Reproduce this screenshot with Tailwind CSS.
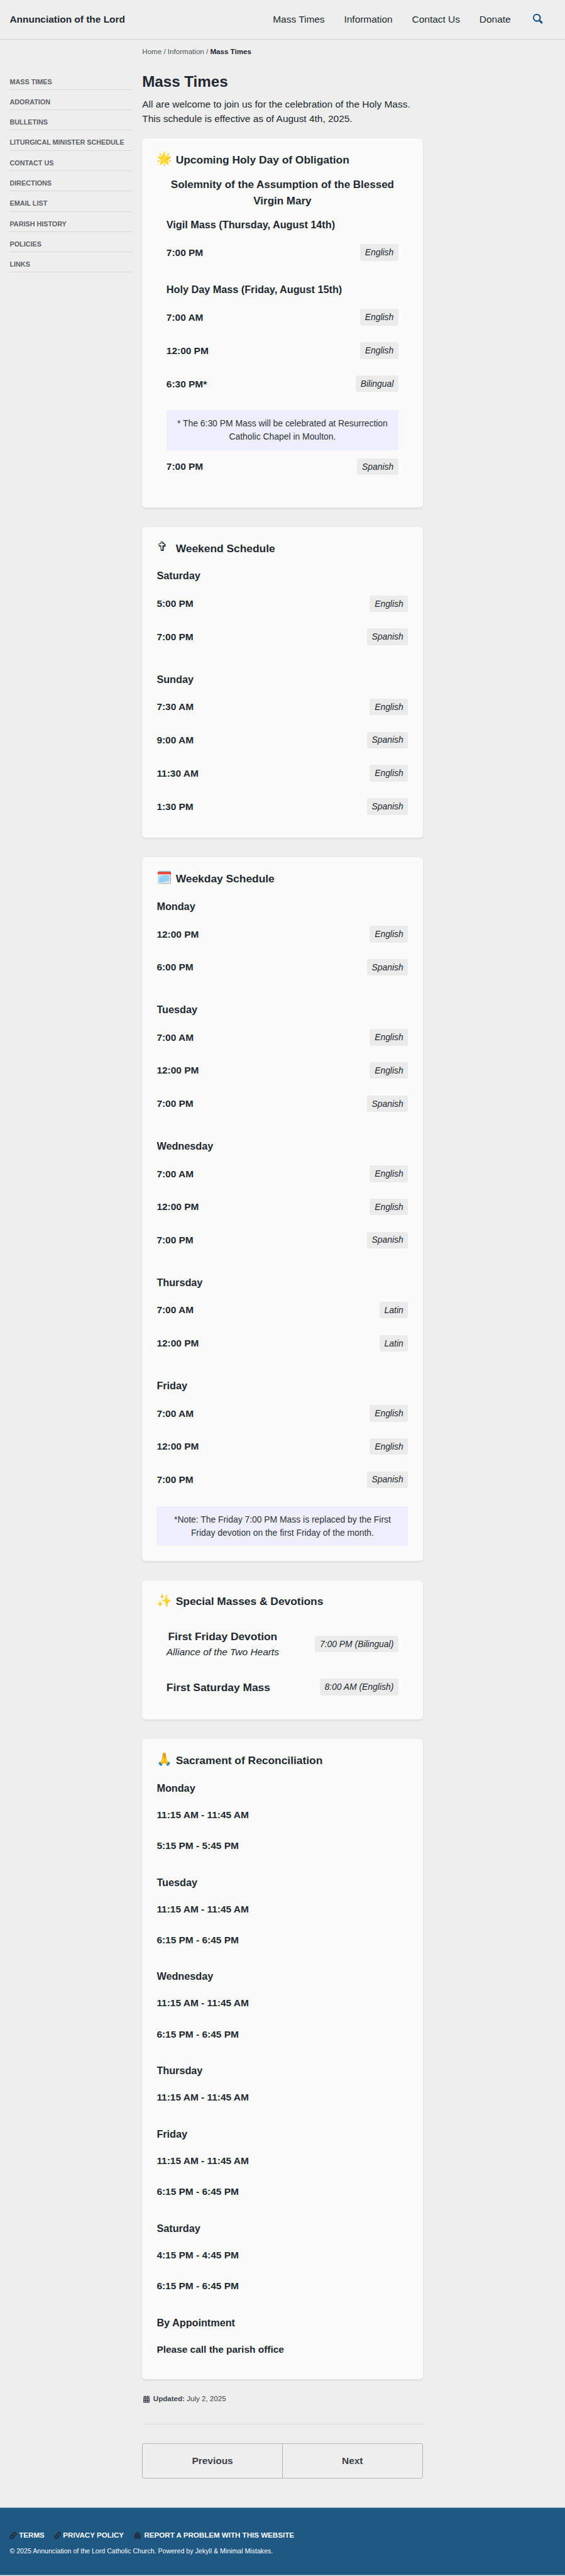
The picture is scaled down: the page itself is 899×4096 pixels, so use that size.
<!DOCTYPE html>
<html lang="en" class="text-[15.45px]">
<head>
<meta charset="utf-8">
<title>Mass Times - Annunciation of the Lord</title>
<script src="https://cdn.jsdelivr.net/npm/@tailwindcss/browser@4"></script>
<style>
  body { font-family: "Liberation Sans", Arial, "Noto Color Emoji", "DejaVu Sans", sans-serif; }
  .icon { font-family: "Noto Color Emoji", "DejaVu Sans", sans-serif; }
</style>
</head>
<body class="bg-[#eeeeee] text-[#222831] text-base leading-normal">
<svg class="hidden">
  <symbol id="link" viewBox="0 0 512 512"><path d="M326.612 185.391c59.747 59.809 58.927 155.698.36 214.59-.11.12-.24.25-.36.37l-67.2 67.2c-59.27 59.27-155.699 59.262-214.96 0-59.27-59.26-59.27-155.7 0-214.96l37.106-37.106c9.84-9.84 26.786-3.3 27.294 10.606.648 17.722 3.826 35.527 9.69 52.721 1.986 5.822.567 12.262-3.783 16.612l-13.087 13.087c-28.026 28.026-28.905 73.66-1.155 101.96 28.024 28.579 74.086 28.749 102.325.51l67.2-67.19c28.191-28.191 28.073-73.757 0-101.83-3.701-3.694-7.429-6.564-10.341-8.569a16.037 16.037 0 0 1-6.947-12.606c-.396-10.567 3.348-21.456 11.698-29.806l21.054-21.055c5.521-5.521 14.182-6.199 20.584-1.731a152.482 152.482 0 0 1 20.522 17.197zM467.547 44.449c-59.261-59.262-155.69-59.27-214.96 0l-67.2 67.2c-.12.12-.25.25-.36.37-58.566 58.892-59.387 154.781.36 214.59a152.454 152.454 0 0 0 20.521 17.196c6.402 4.468 15.064 3.789 20.584-1.731l21.054-21.055c8.35-8.35 12.094-19.239 11.698-29.806a16.037 16.037 0 0 0-6.947-12.606c-2.912-2.005-6.64-4.875-10.341-8.569-28.073-28.073-28.191-73.639 0-101.83l67.2-67.19c28.239-28.239 74.3-28.069 102.325.51 27.75 28.3 26.872 73.934-1.155 101.96l-13.087 13.087c-4.35 4.35-5.769 10.79-3.783 16.612 5.864 17.194 9.042 34.999 9.69 52.721.509 13.906 17.454 20.446 27.294 10.606l37.106-37.106c59.271-59.259 59.271-155.699.001-214.959z"/></symbol>
</svg>

<header class="border-b border-[#cfd0d1]">
  <div class="flex h-16 items-center px-4">
    <a class="mr-auto font-bold">Annunciation of the Lord</a>
    <nav class="flex gap-8">
      <a>Mass Times</a>
      <a>Information</a>
      <a>Contact Us</a>
      <a>Donate</a>
    </nav>
    <button class="ml-[35.5px] mr-[20px]" aria-label="Search">
      <svg class="mb-[2px] block size-4 fill-[#1f5885]" viewBox="0 0 16 16"><path d="M15.5,13.12L13.19,10.8a1.69,1.69,0,0,0-1.28-.55l-.06-.06A6.5,6.5,0,0,0,5.77,0,6.5,6.5,0,0,0,2.46,11.59a6.47,6.47,0,0,0,7.74.26l.05.05a1.65,1.65,0,0,0,.5,1.24l2.38,2.38A1.68,1.68,0,0,0,15.5,13.12ZM6.4,2A4.41,4.41,0,1,1,2,6.4,4.43,4.43,0,0,1,6.4,2Z"/></svg>
    </button>
  </div>
</header>

<nav class="pl-[226.3px] pt-3 text-xs leading-normal text-[#50565d]">
  <span>Home</span> / <span>Information</span> / <strong class="text-[#222831]">Mass Times</strong>
</nav>

<div class="flex">
  <aside class="ml-4 mr-[15.6px] mt-[18.7px] w-[195.2px] shrink-0">
    <ul class="text-[0.7rem] font-bold uppercase leading-[23.2px] text-[#5d6166]">
      <li class="flex h-[32.3px] flex-col justify-end border-b border-[#d6d7d8]">Mass Times</li>
      <li class="flex h-[32.3px] flex-col justify-end border-b border-[#d6d7d8]">Adoration</li>
      <li class="flex h-[32.3px] flex-col justify-end border-b border-[#d6d7d8]">Bulletins</li>
      <li class="flex h-[32.3px] flex-col justify-end border-b border-[#d6d7d8]">Liturgical Minister Schedule</li>
      <li class="flex h-[32.3px] flex-col justify-end border-b border-[#d6d7d8]">Contact Us</li>
      <li class="flex h-[32.3px] flex-col justify-end border-b border-[#d6d7d8]">Directions</li>
      <li class="flex h-[32.3px] flex-col justify-end border-b border-[#d6d7d8]">Email List</li>
      <li class="flex h-[32.3px] flex-col justify-end border-b border-[#d6d7d8]">Parish History</li>
      <li class="flex h-[32.3px] flex-col justify-end border-b border-[#d6d7d8]">Policies</li>
      <li class="flex h-[32.3px] flex-col justify-end border-b border-[#d6d7d8]">Links</li>
    </ul>
  </aside>

  <main class="w-[446.4px]">
    <h1 class="mt-[24.5px] text-[1.563rem] font-bold leading-[1.2]">Mass Times</h1>
    <p class="mt-[8.7px] mb-[1.3rem]">All are welcome to join us for the celebration of the Holy Mass.<br>This schedule is effective as of August 4th, 2025.</p>

    <section class="rounded-[5.6px] bg-[#fafafa] p-6 pb-10 shadow-[0_1.4px_3.5px_rgba(0,0,0,0.08)]">
      <h2 class="flex h-[22.6px] items-center text-lg font-bold leading-none"><span class="icon w-[30.3px] shrink-0 pb-[5px] text-[20px] font-normal">🌟</span>Upcoming Holy Day of Obligation</h2>
      <div class="mt-[15px] px-4">
        <h3 class="text-center text-[1.1rem] font-bold whitespace-nowrap">Solemnity of the Assumption of the Blessed<br>Virgin Mary</h3>
        <h4 class="mt-[12.8px] mb-[5.7px] text-[1.05rem] font-bold">Vigil Mass (Thursday, August 14th)</h4>
        <div class="flex h-[52.88px] items-center justify-between"><b>7:00 PM</b><i class="rounded-[3px] bg-[#ebebeb] px-2 py-[2.95px] text-[0.9rem]">English</i></div>
        <h4 class="mt-[20.1px] mb-[5.7px] text-[1.05rem] font-bold">Holy Day Mass (Friday, August 15th)</h4>
        <div class="flex h-[52.88px] items-center justify-between"><b>7:00 AM</b><i class="rounded-[3px] bg-[#ebebeb] px-2 py-[2.95px] text-[0.9rem]">English</i></div>
        <div class="flex h-[52.88px] items-center justify-between"><b>12:00 PM</b><i class="rounded-[3px] bg-[#ebebeb] px-2 py-[2.95px] text-[0.9rem]">English</i></div>
        <div class="flex h-[52.88px] items-center justify-between"><b>6:30 PM*</b><i class="rounded-[3px] bg-[#ebebeb] px-2 py-[2.95px] text-[0.9rem]">Bilingual</i></div>
        <p class="mt-[15.1px] rounded-[3px] bg-[#eeeeff] py-[11.1px] text-center text-[0.9rem] whitespace-nowrap text-[#2d333b]">* The 6:30 PM Mass will be celebrated at Resurrection<br>Catholic Chapel in Moulton.</p>
        <div class="flex h-[52.88px] items-center justify-between"><b>7:00 PM</b><i class="rounded-[3px] bg-[#ebebeb] px-2 py-[2.95px] text-[0.9rem]">Spanish</i></div>
      </div>
    </section>

    <section class="mt-8 rounded-[5.6px] bg-[#fafafa] p-6 shadow-[0_1.4px_3.5px_rgba(0,0,0,0.08)]">
      <h2 class="mb-[19.8px] flex h-[22.6px] items-center text-lg font-bold leading-none"><span class="icon w-[30.3px] shrink-0 pb-[7px] text-[20px] font-normal">✞</span>Weekend Schedule</h2>
      <div class="flex flex-col gap-[28.3px]">
        <div>
          <h3 class="mb-[5.7px] text-[1.05rem] font-bold">Saturday</h3>
          <div class="flex h-[52.88px] items-center justify-between"><b>5:00 PM</b><i class="rounded-[3px] bg-[#ebebeb] px-2 py-[2.95px] text-[0.9rem]">English</i></div>
          <div class="flex h-[52.88px] items-center justify-between"><b>7:00 PM</b><i class="rounded-[3px] bg-[#ebebeb] px-2 py-[2.95px] text-[0.9rem]">Spanish</i></div>
        </div>
        <div>
          <h3 class="mb-[5.7px] text-[1.05rem] font-bold">Sunday</h3>
          <div class="flex h-[52.88px] items-center justify-between"><b>7:30 AM</b><i class="rounded-[3px] bg-[#ebebeb] px-2 py-[2.95px] text-[0.9rem]">English</i></div>
          <div class="flex h-[52.88px] items-center justify-between"><b>9:00 AM</b><i class="rounded-[3px] bg-[#ebebeb] px-2 py-[2.95px] text-[0.9rem]">Spanish</i></div>
          <div class="flex h-[52.88px] items-center justify-between"><b>11:30 AM</b><i class="rounded-[3px] bg-[#ebebeb] px-2 py-[2.95px] text-[0.9rem]">English</i></div>
          <div class="flex h-[52.88px] items-center justify-between"><b>1:30 PM</b><i class="rounded-[3px] bg-[#ebebeb] px-2 py-[2.95px] text-[0.9rem]">Spanish</i></div>
        </div>
      </div>
    </section>

    <section class="mt-8 rounded-[5.6px] bg-[#fafafa] p-6 shadow-[0_1.4px_3.5px_rgba(0,0,0,0.08)]">
      <h2 class="mb-[19.8px] flex h-[22.6px] items-center text-lg font-bold leading-none"><span class="icon w-[30.3px] shrink-0 pb-[5px] text-[20px] font-normal">🗓️</span>Weekday Schedule</h2>
      <div class="flex flex-col gap-[28.3px]">
        <div>
          <h3 class="mb-[5.7px] text-[1.05rem] font-bold">Monday</h3>
          <div class="flex h-[52.88px] items-center justify-between"><b>12:00 PM</b><i class="rounded-[3px] bg-[#ebebeb] px-2 py-[2.95px] text-[0.9rem]">English</i></div>
          <div class="flex h-[52.88px] items-center justify-between"><b>6:00 PM</b><i class="rounded-[3px] bg-[#ebebeb] px-2 py-[2.95px] text-[0.9rem]">Spanish</i></div>
        </div>
        <div>
          <h3 class="mb-[5.7px] text-[1.05rem] font-bold">Tuesday</h3>
          <div class="flex h-[52.88px] items-center justify-between"><b>7:00 AM</b><i class="rounded-[3px] bg-[#ebebeb] px-2 py-[2.95px] text-[0.9rem]">English</i></div>
          <div class="flex h-[52.88px] items-center justify-between"><b>12:00 PM</b><i class="rounded-[3px] bg-[#ebebeb] px-2 py-[2.95px] text-[0.9rem]">English</i></div>
          <div class="flex h-[52.88px] items-center justify-between"><b>7:00 PM</b><i class="rounded-[3px] bg-[#ebebeb] px-2 py-[2.95px] text-[0.9rem]">Spanish</i></div>
        </div>
        <div>
          <h3 class="mb-[5.7px] text-[1.05rem] font-bold">Wednesday</h3>
          <div class="flex h-[52.88px] items-center justify-between"><b>7:00 AM</b><i class="rounded-[3px] bg-[#ebebeb] px-2 py-[2.95px] text-[0.9rem]">English</i></div>
          <div class="flex h-[52.88px] items-center justify-between"><b>12:00 PM</b><i class="rounded-[3px] bg-[#ebebeb] px-2 py-[2.95px] text-[0.9rem]">English</i></div>
          <div class="flex h-[52.88px] items-center justify-between"><b>7:00 PM</b><i class="rounded-[3px] bg-[#ebebeb] px-2 py-[2.95px] text-[0.9rem]">Spanish</i></div>
        </div>
        <div>
          <h3 class="mb-[5.7px] text-[1.05rem] font-bold">Thursday</h3>
          <div class="flex h-[52.88px] items-center justify-between"><b>7:00 AM</b><i class="rounded-[3px] bg-[#ebebeb] px-2 py-[2.95px] text-[0.9rem]">Latin</i></div>
          <div class="flex h-[52.88px] items-center justify-between"><b>12:00 PM</b><i class="rounded-[3px] bg-[#ebebeb] px-2 py-[2.95px] text-[0.9rem]">Latin</i></div>
        </div>
        <div>
          <h3 class="mb-[5.7px] text-[1.05rem] font-bold">Friday</h3>
          <div class="flex h-[52.88px] items-center justify-between"><b>7:00 AM</b><i class="rounded-[3px] bg-[#ebebeb] px-2 py-[2.95px] text-[0.9rem]">English</i></div>
          <div class="flex h-[52.88px] items-center justify-between"><b>12:00 PM</b><i class="rounded-[3px] bg-[#ebebeb] px-2 py-[2.95px] text-[0.9rem]">English</i></div>
          <div class="flex h-[52.88px] items-center justify-between"><b>7:00 PM</b><i class="rounded-[3px] bg-[#ebebeb] px-2 py-[2.95px] text-[0.9rem]">Spanish</i></div>
        </div>
      </div>
      <p class="mt-4 rounded-[3px] bg-[#eeeeff] py-[11px] text-center text-[0.9rem] whitespace-nowrap text-[#2d333b]">*Note: The Friday 7:00 PM Mass is replaced by the First<br>Friday devotion on the first Friday of the month.</p>
    </section>

    <section class="mt-8 rounded-[5.6px] bg-[#fafafa] p-6 pb-[38.2px] shadow-[0_1.4px_3.5px_rgba(0,0,0,0.08)]">
      <h2 class="flex h-[22.6px] items-center text-lg font-bold leading-none"><span class="icon w-[30.3px] shrink-0 pb-[5px] text-[20px] font-normal">✨</span>Special Masses &amp; Devotions</h2>
      <div class="mt-[31.1px] flex flex-col gap-[30.6px] px-4">
        <div class="flex items-center justify-between">
          <div class="text-center"><h3 class="text-lg font-bold leading-normal">First Friday Devotion</h3><i class="block">Alliance of the Two Hearts</i></div>
          <i class="rounded-[3px] bg-[#ebebeb] px-2 py-[2.95px] text-[0.9rem]">7:00 PM (Bilingual)</i>
        </div>
        <div class="flex items-center justify-between">
          <h3 class="text-lg font-bold leading-normal">First Saturday Mass</h3>
          <i class="rounded-[3px] bg-[#ebebeb] px-2 py-[2.95px] text-[0.9rem]">8:00 AM (English)</i>
        </div>
      </div>
    </section>

    <section class="mt-8 rounded-[5.6px] bg-[#fafafa] p-6 shadow-[0_1.4px_3.5px_rgba(0,0,0,0.08)]">
      <h2 class="mb-[19.8px] flex h-[22.6px] items-center text-lg font-bold leading-none"><span class="icon w-[30.3px] shrink-0 pb-[5px] text-[20px] font-normal">🙏</span>Sacrament of Reconciliation</h2>
      <div class="flex flex-col gap-[21.4px]">
        <div>
          <h3 class="mb-[5.7px] text-[1.05rem] font-bold">Monday</h3>
          <div class="flex h-[49.26px] items-center"><b>11:15 AM - 11:45 AM</b></div>
          <div class="flex h-[49.26px] items-center"><b>5:15 PM - 5:45 PM</b></div>
        </div>
        <div>
          <h3 class="mb-[5.7px] text-[1.05rem] font-bold">Tuesday</h3>
          <div class="flex h-[49.26px] items-center"><b>11:15 AM - 11:45 AM</b></div>
          <div class="flex h-[49.26px] items-center"><b>6:15 PM - 6:45 PM</b></div>
        </div>
        <div>
          <h3 class="mb-[5.7px] text-[1.05rem] font-bold">Wednesday</h3>
          <div class="flex h-[49.26px] items-center"><b>11:15 AM - 11:45 AM</b></div>
          <div class="flex h-[49.26px] items-center"><b>6:15 PM - 6:45 PM</b></div>
        </div>
        <div>
          <h3 class="mb-[5.7px] text-[1.05rem] font-bold">Thursday</h3>
          <div class="flex h-[49.26px] items-center"><b>11:15 AM - 11:45 AM</b></div>
        </div>
        <div>
          <h3 class="mb-[5.7px] text-[1.05rem] font-bold">Friday</h3>
          <div class="flex h-[49.26px] items-center"><b>11:15 AM - 11:45 AM</b></div>
          <div class="flex h-[49.26px] items-center"><b>6:15 PM - 6:45 PM</b></div>
        </div>
        <div>
          <h3 class="mb-[5.7px] text-[1.05rem] font-bold">Saturday</h3>
          <div class="flex h-[49.26px] items-center"><b>4:15 PM - 4:45 PM</b></div>
          <div class="flex h-[49.26px] items-center"><b>6:15 PM - 6:45 PM</b></div>
        </div>
        <div>
          <h3 class="mb-[5.7px] text-[1.05rem] font-bold">By Appointment</h3>
          <div class="flex h-[49.26px] items-center"><b>Please call the parish office</b></div>
        </div>
      </div>
    </section>

    <p class="mt-6 flex items-center text-xs leading-normal text-[#40454d]">
      <svg class="ml-[2.1px] mr-[5.3px] h-[11.6px] w-[10.2px] fill-current" viewBox="0 0 448 512"><path d="M128 0c17.7 0 32 14.3 32 32V64H288V32c0-17.7 14.3-32 32-32s32 14.3 32 32V64h48c26.5 0 48 21.5 48 48v48H0V112C0 85.5 21.5 64 48 64H96V32c0-17.7 14.3-32 32-32zM0 192H448V464c0 26.5-21.5 48-48 48H48c-26.5 0-48-21.5-48-48V192zm64 80v32c0 8.8 7.2 16 16 16h32c8.8 0 16-7.2 16-16V272c0-8.8-7.2-16-16-16H80c-8.8 0-16 7.2-16 16zm128 0v32c0 8.8 7.2 16 16 16h32c8.8 0 16-7.2 16-16V272c0-8.8-7.2-16-16-16H208c-8.8 0-16 7.2-16 16zm144-16c-8.8 0-16 7.2-16 16v32c0 8.8 7.2 16 16 16h32c8.8 0 16-7.2 16-16V272c0-8.8-7.2-16-16-16H336zM64 400v32c0 8.8 7.2 16 16 16h32c8.8 0 16-7.2 16-16V400c0-8.8-7.2-16-16-16H80c-8.8 0-16 7.2-16 16zm144-16c-8.8 0-16 7.2-16 16v32c0 8.8 7.2 16 16 16h32c8.8 0 16-7.2 16-16V400c0-8.8-7.2-16-16-16H208zm112 16v32c0 8.8 7.2 16 16 16h32c8.8 0 16-7.2 16-16V400c0-8.8-7.2-16-16-16H336c-8.8 0-16 7.2-16 16z"/></svg>
      <span><strong>Updated:</strong> July 2, 2025</span>
    </p>
    <hr class="mt-[29.8px] border-t border-[#dadada]">
    <nav class="mt-[30.2px] flex h-[56.4px] divide-x divide-[#b2b3b4] rounded-[3px] border border-[#b2b3b4] font-bold text-[#3d4148]">
      <a class="flex flex-1 items-center justify-center">Previous</a>
      <a class="flex flex-1 items-center justify-center">Next</a>
    </nav>
  </main>
</div>

<footer class="mt-[46.1px] h-[108px] border-y border-[#7396b1] bg-[#1f5883] px-4 pt-[35px] text-white">
  <ul class="flex text-xs leading-normal font-bold">
    <li class="mr-[14.8px] flex items-center gap-[3.2px]"><svg class="size-[11.6px] fill-[#222831]"><use href="#link"/></svg>TERMS</li>
    <li class="mr-[14.8px] flex items-center gap-[3.2px]"><svg class="size-[11.6px] fill-[#222831]"><use href="#link"/></svg>PRIVACY POLICY</li>
    <li class="flex items-center gap-[3.2px]"><svg class="mx-[1.45px] size-[11.6px] fill-[#222831]" viewBox="0 0 512 512"><path d="M511.988 288.9c-.478 17.43-15.217 31.1-32.653 31.1H424v16c0 21.864-4.882 42.584-13.6 61.145l60.228 60.228c12.496 12.497 12.496 32.758 0 45.255-12.498 12.497-32.759 12.496-45.256 0l-54.736-54.736C345.886 467.965 314.351 480 280 480V236c0-6.627-5.373-12-12-12h-24c-6.627 0-12 5.373-12 12v244c-34.351 0-65.886-12.035-90.636-32.108l-54.736 54.736c-12.498 12.497-32.759 12.496-45.256 0-12.496-12.497-12.496-32.758 0-45.255l60.228-60.228C92.882 378.584 88 357.864 88 336v-16H32.666C15.23 320 .491 306.33.013 288.9-.484 270.816 14.028 256 32 256h56v-58.745l-46.628-46.628c-12.496-12.497-12.496-32.758 0-45.255 12.498-12.497 32.758-12.497 45.256 0L141.255 160h229.489l54.627-54.627c12.498-12.497 32.758-12.497 45.256 0 12.496 12.497 12.496 32.758 0 45.255L424 197.255V256h56c17.972 0 32.484 14.816 31.988 32.9zM257 0c-61.856 0-112 50.144-112 112h224C369 50.144 318.856 0 257 0z"/></svg>REPORT A PROBLEM WITH THIS WEBSITE</li>
  </ul>
  <p class="mt-[8.4px] text-[0.6875rem] leading-normal">© 2025 Annunciation of the Lord Catholic Church. Powered by Jekyll &amp; Minimal Mistakes.</p>
</footer>
</body>
</html>
